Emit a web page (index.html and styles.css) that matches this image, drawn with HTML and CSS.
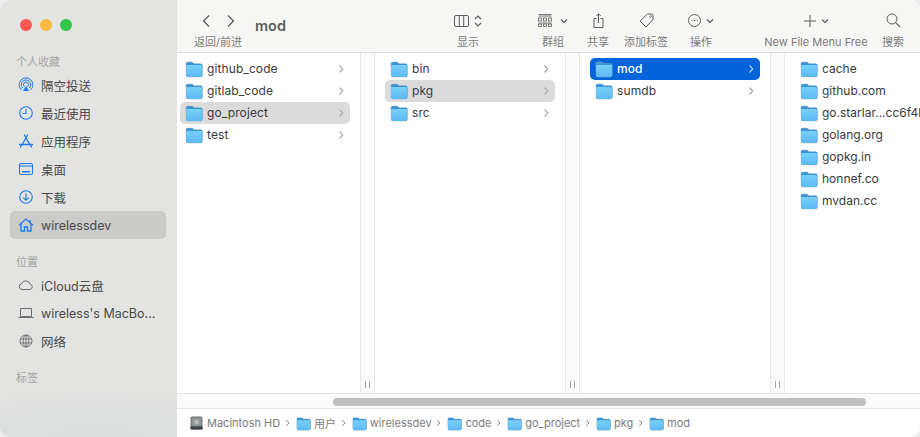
FILE: index.html
```html
<!DOCTYPE html>
<html>
	<head>
		<meta charset="UTF-8">
		<title>mod</title>
		<link rel="stylesheet" href="styles.css">
	</head>
	<body>
		<svg class="defs" width="0" height="0">
			<defs>
				<linearGradient id="fbody" x1="0" y1="0" x2="0" y2="1">
					<stop offset="0" stop-color="#7ad0fb"/>
					<stop offset="1" stop-color="#5db9f2"/>
				</linearGradient>
				<symbol id="folder" viewBox="0 0 16 16">
					<path d="M.6 3.400C.6 2.400 1.400 1.600 2.400 1.600h3.500c.5 0 .9.2 1.200.5l.8.9h6.200c1 0 1.300.8 1.300 1.800v8.800c0 1-.7 1.800-1.700 1.800h-11c-1 0-1.900-.8-1.900-1.800z" fill="#9fb1bd"/>
					<path d="M1 3.600C1 2.700 1.600 2 2.500 2h3.400c.5 0 .8.2 1.100.5l.8.9h6.200c.9 0 1.500.7 1.500 1.600v8.400c0 .9-.6 1.600-1.500 1.600h-11C1.600 15 1 14.300 1 13.400z" fill="#3a94d8"/>
					<path d="M1 5.400c0-.5.4-.9.9-.9h12.200c.5 0 .9.4.9.9v8.100c0 .9-.6 1.500-1.500 1.500h-11C1.600 15 1 14.400 1 13.500z" fill="url(#fbody)"/>
				</symbol>
				<symbol id="chev" viewBox="0 0 6 10">
					<path d="M1.500 1.500L4.800 5 1.500 8.500" fill="none" stroke="currentColor" stroke-width="1.100"/>
				</symbol>
			</defs>
		</svg>
		<div class="window">
			<aside class="sidebar">
				<div class="lights"><i class="red"></i><i class="yellow"></i><i class="green"></i></div>
				<h4 class="side-title">个人收藏</h4>
				<a class="side-item">
					<svg viewBox="0 0 16 16"><g fill="none" stroke="#1a7bf2" stroke-width="1"><path d="M3.500 13A6.900 6.900 0 1 1 12.500 13"/><path d="M5 11.300A4.700 4.700 0 1 1 11 11.300"/><path d="M6.500 9.600A2.500 2.500 0 1 1 9.500 9.600"/></g><path d="M8 9l3 5H5z" fill="#1a7bf2"/></svg>
					<span>隔空投送</span>
				</a>
				<a class="side-item">
					<svg viewBox="0 0 16 16"><g fill="none" stroke="#1a7bf2" stroke-width="1.100"><circle cx="8" cy="8" r="6.300"/><path d="M8 4v4.500H4.800"/></g></svg>
					<span>最近使用</span>
				</a>
				<a class="side-item">
					<svg viewBox="0 0 16 16"><g fill="none" stroke="#1a7bf2" stroke-width="1.300" stroke-linecap="round"><path d="M9.500 2L4 12"/><path d="M6.500 2l5.500 10"/><path d="M1.500 11.500h13"/><path d="M3.500 12l-1 2M12.500 12l1 2"/></g></svg>
					<span>应用程序</span>
				</a>
				<a class="side-item">
					<svg viewBox="0 0 16 16"><rect x="1.500" y="2.500" width="13" height="11" rx="1.500" fill="none" stroke="#1a7bf2" stroke-width="1.100"/><path d="M1.500 5h13" stroke="#1a7bf2"/><path d="M4 10.800h8" stroke="#1a7bf2" stroke-width="1.600"/></svg>
					<span>桌面</span>
				</a>
				<a class="side-item">
					<svg viewBox="0 0 16 16"><g fill="none" stroke="#1a7bf2" stroke-width="1.100"><circle cx="8" cy="8" r="6.300"/><path d="M8 4.300v7M5.300 8.700L8 11.300l2.700-2.600"/></g></svg>
					<span>下载</span>
				</a>
				<a class="side-item on">
					<svg viewBox="0 0 16 16"><g fill="none" stroke="#1a7bf2" stroke-width="1.300"><path d="M1 8.300L8 2l7 6.300"/><path d="M3 7v7h3.500v-4h3v4H13V7"/><path d="M12 3v2.500"/></g></svg>
					<span>wirelessdev</span>
				</a>
				<h4 class="side-title second">位置</h4>
				<a class="side-item">
					<svg viewBox="0 0 16 16"><path d="M4 12.500a3 3 0 0 1-.4-5.900 4.500 4.500 0 0 1 8.500.6 2.700 2.700 0 0 1 0 5.300z" fill="none" stroke="#6d6d6d"/></svg>
					<span>iCloud云盘</span>
				</a>
				<a class="side-item">
					<svg viewBox="0 0 16 16"><path d="M2.500 3.500h11v8h-11zM.5 12.500h15" fill="none" stroke="#6d6d6d"/></svg>
					<span>wireless's MacBo...</span>
				</a>
				<a class="side-item">
					<svg viewBox="0 0 16 16"><g fill="none" stroke="#6d6d6d" stroke-width=".9"><circle cx="8" cy="8" r="6"/><ellipse cx="8" cy="8" rx="2.800" ry="6"/><path d="M2.300 6h11.400M2.300 10h11.400M8 2v12"/></g></svg>
					<span>网络</span>
				</a>
				<h4 class="side-title third">标签</h4>
			</aside>
			<main class="main">
				<header class="toolbar">
					<div class="tool nav">
						<div class="tool-icon">
							<svg width="10" height="16" viewBox="0 0 10 16"><path d="M8 2.500L2.500 8 8 13.500" fill="none" stroke="#555" stroke-width="1.200"/></svg>
							<svg width="10" height="16" viewBox="0 0 10 16"><path d="M2 2.500L7.500 8 2 13.500" fill="none" stroke="#555" stroke-width="1.200"/></svg>
						</div>
						<span>返回/前进</span>
					</div>
					<h1 class="title">mod</h1>
					<div class="tool view">
						<div class="tool-icon">
							<svg width="15" height="12" viewBox="0 0 15 12"><path d="M2 .5h11A1.500 1.500 0 0 1 14.500 2v8a1.500 1.500 0 0 1-1.500 1.500H2A1.500 1.500 0 0 1 .5 10V2A1.500 1.500 0 0 1 2 .5zM5.300.5v11M9.700.5v11" fill="none" stroke="#5c5c5c"/></svg>
							<svg width="8" height="12" viewBox="0 0 8 12"><path d="M1 4l3-3 3 3M1 8l3 3 3-3" fill="none" stroke="#5c5c5c" stroke-width="1.200"/></svg>
						</div>
						<span>显示</span>
					</div>
					<div class="tool group">
						<div class="tool-icon">
							<svg width="14" height="13" viewBox="0 0 14 13"><g fill="none" stroke="#5c5c5c" stroke-width=".8"><path d="M.5.500h13M.5 2h13"/><rect x=".5" y="4" width="3" height="3"/><rect x="5.500" y="4" width="3" height="3"/><rect x="10.500" y="4" width="3" height="3"/><path d="M.5 9h13"/><rect x=".5" y="10" width="3" height="2.500"/><rect x="5.500" y="10" width="3" height="2.500"/><rect x="10.500" y="10" width="3" height="2.500"/></g></svg>
							<svg width="8" height="6" viewBox="0 0 8 6"><path d="M1 1.500l3 3 3-3" fill="none" stroke="#5c5c5c" stroke-width="1.200"/></svg>
						</div>
						<span>群组</span>
					</div>
					<div class="tool share">
						<div class="tool-icon">
							<svg width="11" height="15" viewBox="0 0 11 15"><path d="M3.500 5.500H1v9h9v-9H7.500M5.500 10V.8M3.300 3l2.200-2.200L7.700 3" fill="none" stroke="#5c5c5c"/></svg>
						</div>
						<span>共享</span>
					</div>
					<div class="tool tag">
						<div class="tool-icon">
							<svg width="15" height="15" viewBox="0 0 15 15"><path d="M8.500 1h4a1.500 1.500 0 0 1 1.500 1.500v4L7 14 1 8z" fill="none" stroke="#5c5c5c"/><circle cx="11.500" cy="3.500" r=".9" fill="none" stroke="#5c5c5c" stroke-width=".7"/></svg>
						</div>
						<span>添加标签</span>
					</div>
					<div class="tool action">
						<div class="tool-icon">
							<svg width="13" height="13" viewBox="0 0 13 13"><circle cx="6.500" cy="6.500" r="6" fill="none" stroke="#5c5c5c"/><path d="M3.300 6.500h1M6 6.500h1M8.700 6.500h1" stroke="#5c5c5c"/></svg>
							<svg width="8" height="6" viewBox="0 0 8 6"><path d="M1 1.500l3 3 3-3" fill="none" stroke="#5c5c5c" stroke-width="1.200"/></svg>
						</div>
						<span>操作</span>
					</div>
					<div class="tool newfile">
						<div class="tool-icon">
							<svg width="12" height="12" viewBox="0 0 12 12"><path d="M6 0v12M0 6h12" stroke="#5c5c5c"/></svg>
							<svg width="8" height="6" viewBox="0 0 8 6"><path d="M1 1.500l3 3 3-3" fill="none" stroke="#5c5c5c" stroke-width="1.200"/></svg>
						</div>
						<span>New File Menu Free</span>
					</div>
					<div class="tool search">
						<div class="tool-icon">
							<svg width="15" height="15" viewBox="0 0 15 15"><circle cx="6" cy="6" r="5" fill="none" stroke="#5c5c5c"/><path d="M9.800 9.800l4.400 4.400" stroke="#5c5c5c" stroke-width="1.200"/></svg>
						</div>
						<span>搜索</span>
					</div>
				</header>
				<section class="browser">
					<div class="col first">
						<div class="row"><svg class="fd"><use href="#folder"/></svg><span>github_code</span><svg class="arr"><use href="#chev"/></svg></div>
						<div class="row"><svg class="fd"><use href="#folder"/></svg><span>gitlab_code</span><svg class="arr"><use href="#chev"/></svg></div>
						<div class="row sel"><svg class="fd"><use href="#folder"/></svg><span>go_project</span><svg class="arr"><use href="#chev"/></svg></div>
						<div class="row"><svg class="fd"><use href="#folder"/></svg><span>test</span><svg class="arr"><use href="#chev"/></svg></div>
					</div>
					<div class="gutter"><b></b></div>
					<div class="col">
						<div class="row"><svg class="fd"><use href="#folder"/></svg><span>bin</span><svg class="arr"><use href="#chev"/></svg></div>
						<div class="row sel"><svg class="fd"><use href="#folder"/></svg><span>pkg</span><svg class="arr"><use href="#chev"/></svg></div>
						<div class="row"><svg class="fd"><use href="#folder"/></svg><span>src</span><svg class="arr"><use href="#chev"/></svg></div>
					</div>
					<div class="gutter"><b></b></div>
					<div class="col">
						<div class="row active"><svg class="fd"><use href="#folder"/></svg><span>mod</span><svg class="arr"><use href="#chev"/></svg></div>
						<div class="row"><svg class="fd"><use href="#folder"/></svg><span>sumdb</span><svg class="arr"><use href="#chev"/></svg></div>
					</div>
					<div class="gutter"><b></b></div>
					<div class="col last">
						<div class="row"><svg class="fd"><use href="#folder"/></svg><span>cache</span></div>
						<div class="row"><svg class="fd"><use href="#folder"/></svg><span>github.com</span></div>
						<div class="row"><svg class="fd"><use href="#folder"/></svg><span>go.starlar...cc6f4b</span></div>
						<div class="row"><svg class="fd"><use href="#folder"/></svg><span>golang.org</span></div>
						<div class="row"><svg class="fd"><use href="#folder"/></svg><span>gopkg.in</span></div>
						<div class="row"><svg class="fd"><use href="#folder"/></svg><span>honnef.co</span></div>
						<div class="row"><svg class="fd"><use href="#folder"/></svg><span>mvdan.cc</span></div>
					</div>
				</section>
				<div class="hscroll"><div class="thumb"></div></div>
				<footer class="pathbar">
					<svg class="disk" viewBox="0 0 13 14"><rect x=".5" y=".5" width="12" height="13" rx="1.500" fill="#6f7478"/><rect x="1.500" y="1.500" width="10" height="8.500" fill="#8d9296"/><circle cx="6.500" cy="6" r="2.500" fill="#b4b8ba"/><rect x=".5" y="10.500" width="12" height="3" fill="#3f4245"/></svg>
					<span>Macintosh HD</span><svg class="sep"><use href="#chev"/></svg>
					<svg class="fd-s"><use href="#folder"/></svg><span>用户</span><svg class="sep"><use href="#chev"/></svg>
					<svg class="fd-s"><use href="#folder"/></svg><span>wirelessdev</span><svg class="sep"><use href="#chev"/></svg>
					<svg class="fd-s"><use href="#folder"/></svg><span>code</span><svg class="sep"><use href="#chev"/></svg>
					<svg class="fd-s"><use href="#folder"/></svg><span>go_project</span><svg class="sep"><use href="#chev"/></svg>
					<svg class="fd-s"><use href="#folder"/></svg><span>pkg</span><svg class="sep"><use href="#chev"/></svg>
					<svg class="fd-s"><use href="#folder"/></svg><span>mod</span>
				</footer>
			</main>
		</div>
	</body>
</html>
```

FILE: styles.css
```css
*{padding: 0;margin: 0;box-sizing: border-box;}
html,body{width: 920px;height: 437px;overflow: hidden;background: #eeeeee;}
body{font-family: Inter,"Noto Sans CJK SC",sans-serif;font-size: 12px;color: #3a3a3a;}
.defs{display: block;height: 0;}

.window{
	display: flex;
	width: 920px;height: 437px;
	border-radius: 10px;
	overflow: hidden;
	background: #fff;
}

/* sidebar */
.sidebar{
	flex: none;
	width: 177px;
	padding: 19px 11px 0 10px;
	background: radial-gradient(ellipse 190px 46px at 95px 437px,#dadedd 0,#dcdfde 50%,rgba(227,227,225,0) 100%),#e3e3e1;
}
.lights{display: flex;gap: 8px;height: 14px;margin-left: 10px;margin-bottom: 22px;}
.lights i{display: block;width: 12px;height: 12px;border-radius: 50%;}
.red{background: #fc5753;}
.yellow{background: #fdbc40;}
.green{background: #33c748;}
.side-title{
	font-size: 11px;font-weight: normal;line-height: 14px;
	color: #a3a3a3;
	margin: 0 0 2px 6px;
}
.side-title.second{margin-top: 16px;}
.side-title.third{margin-top: 16px;}
.side-item{
	display: flex;align-items: center;gap: 7px;
	height: 28px;
	padding-left: 8px;
	border-radius: 5px;
	font-size: 12.5px;color: #4a4a4a;
}
.side-item svg{flex: none;width: 16px;height: 16px;}
.side-item.on{background: #cbcbc9;}

/* toolbar */
.main{flex: 1;display: flex;flex-direction: column;min-width: 0;}
.toolbar{
	flex: none;
	display: flex;
	height: 53px;
	background: #f6f6f4;
	border-bottom: 1px solid #dcdcdc;
}
.tool{
	flex: none;
	display: flex;flex-direction: column;align-items: center;
	padding-top: 11px;
	font-size: 11px;line-height: 14px;color: #7c7c7c;
	white-space: nowrap;
}
.tool-icon{display: flex;align-items: center;justify-content: center;gap: 5px;height: 19px;margin-bottom: 5px;}
.nav{width: 50px;margin-left: 16px;}
.nav .tool-icon{gap: 15px;}
.title{flex: none;width: 32px;margin: 17px 0 0 12px;font-size: 14.5px;line-height: 18px;color: #5a5a5a;font-weight: 600;}
.view{width: 30px;margin-left: 166px;}
.group{width: 30px;margin-left: 55px;}
.group .tool-icon{gap: 8px;}
.share{width: 22px;margin-left: 19px;}
.tag{width: 46px;margin-left: 14px;}
.action{width: 22px;margin-left: 21px;}
.newfile{width: 104px;margin-left: 52px;}
.search{width: 22px;margin-left: 14px;}

/* columns */
.browser{flex: 1;display: flex;min-height: 0;background: #fff;}
.col{flex: none;width: 190px;padding: 5px 10px 0 10px;font-size: 12px;letter-spacing: .1px;}
.col.first{width: 183px;padding: 5px 10px 0 3px;}
.col.last{flex: 1;width: auto;min-width: 0;padding-right: 0;overflow: hidden;letter-spacing: 0;}
.gutter{
	flex: none;
	display: flex;align-items: flex-end;justify-content: center;
	width: 15px;
	padding-bottom: 5px;
	background: #fafafa;
	border-left: 1px solid #e8e8e8;
	border-right: 1px solid #e8e8e8;
}
.gutter b{
	display: block;
	width: 5px;height: 7px;
	border-left: 1px solid #a5a5a5;
	border-right: 1px solid #a5a5a5;
}
.row{
	display: flex;align-items: center;
	height: 22px;
	padding: 0 0 1px 5px;
	border-radius: 5px;
	white-space: nowrap;
}
.row .fd{flex: none;width: 18px;height: 18px;margin-right: 3px;}
.row span{flex: 1;margin-left: 1px;}
.row .arr{flex: none;width: 6px;height: 10px;margin-right: 6px;color: #a8a8a8;}
.row.sel{background: #dbdbdb;}
.row.active{background: #0464dc;color: #fff;font-weight: 500;}
.row.active .arr{color: #b9d3f5;}

/* bottom bars */
.hscroll{
	flex: none;
	height: 16px;
	padding: 4px 0 0 156px;
	background: #fafafa;
	border-top: 1px solid #e6e6e6;
	border-bottom: 1px solid #e3e3e3;
}
.thumb{width: 533px;height: 8px;border-radius: 4px;background: #c0c0c0;}
.pathbar{
	flex: none;
	display: flex;align-items: center;
	height: 28px;
	padding: 0 0 0 13px;
	background: #fff;
	font-size: 11px;color: #7b7b7b;
	white-space: nowrap;
}
.disk{flex: none;width: 13px;height: 14px;margin-right: 4px;}
.fd-s{flex: none;width: 15px;height: 15px;margin-right: 3px;}
.sep{flex: none;width: 5px;height: 8px;margin: 0 6px 0 4.8px;color: #777;}
```
